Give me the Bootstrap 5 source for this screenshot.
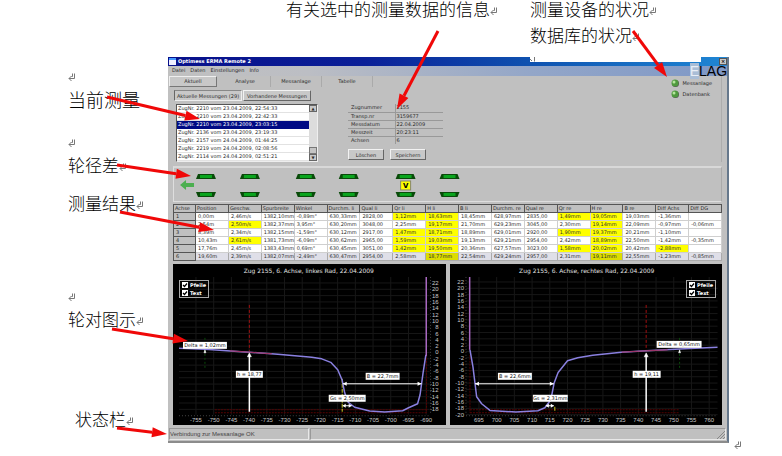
<!DOCTYPE html>
<html lang="zh">
<head>
<meta charset="utf-8">
<meta name="viewport" content="width=device-width, initial-scale=1">
<title>Optimess ERMA Remote 2</title>
<link href="https://cdn.jsdelivr.net/npm/bootstrap@5.3.0/dist/css/bootstrap.min.css" rel="stylesheet">
<style>
body{background:#fff;color:#000;font-family:"Noto Sans CJK SC",sans-serif;font-size:17px;line-height:20px;font-weight:300}
.sheet{min-height:100vh}
.captions{height:57px;padding-left:286px}
.captions .second{margin-left:32px;line-height:26px;margin-top:-4px}
.captions .first{line-height:18px}
.notes{flex:0 0 168px;padding:8px 0 0 68px}
.notes p{margin:0;white-space:nowrap}
.notes .gap-s{margin-top:4px}
.notes .gap-m{margin-top:18px}
.notes .gap-l{margin-top:22px}
.notes .gap-x{margin-top:72px}
.notes .gap-xx{margin-top:80px;padding-left:7px}
.wide-note{font-size:18px}
.edge{flex:0 0 53px;padding:0 0 7px 1px;line-height:8px}
.cr{width:8px;height:8px;fill:none;stroke:#777;stroke-width:1}
.app{background:#c0c0c0;border-right:2px solid #66788c;border-bottom:2px solid #8c8c8c;font:5px/8px "DejaVu Sans",sans-serif;color:#2c2c2c;min-width:0}
.app button,.app a,.app label{font:inherit;color:inherit;text-decoration:none}
.titlebar{height:9px;gap:2px;background:linear-gradient(90deg,#08108a 0,#0a1f98 35%,#0e52b0 65%,#1f86d4 100%);color:#fff;font-weight:700;line-height:9px;padding-left:1px}
.appicon{width:7px;height:7px;background:#eef;border-top:2px solid #49f}
.notch{left:362px;right:26px;top:0;height:5px;background:#fff}
.closebtn{width:8px;height:7px;line-height:5px!important;background:#c8c8c8;border:1px solid #555;color:#000!important;padding:0}
.menubar{height:10px;gap:5px;padding-left:4px;line-height:9px;background:linear-gradient(90deg,#c0c0c0 0,#bcbec4 25%,#93a6c8 65%,#7f98c6 100%)}
.brand{font:14px/10px "Liberation Sans",sans-serif;color:#000}
.brand b{font-weight:400;background:#a9bdd6;color:#e8eef6}
.tabrow{height:11px;padding-left:1px}
.tabrow button{width:51px;border:0;border-right:1px solid #aaa;background:none;padding:0;line-height:9px}
.tabrow .on{width:48px;margin-right:3px;border:1px solid #777;border-top-color:#eee;border-left-color:#eee;background:#c8c8c8}
.push{background:#c8c8c8;border:1px solid #666;border-top-color:#f2f2f2;border-left-color:#f2f2f2;padding:0;height:11px;line-height:8px!important}
.push.down{border-color:#888 #eee #eee #666}
.picks{gap:1px;margin:3px 0 3px 6px}
.picks .push{width:68px;white-space:nowrap}
.runs{margin-left:8px;width:142px;height:58px;background:#fff;border:1px solid #555;border-right-color:#eee;border-bottom-color:#eee}
.runs .item{display:block;padding-left:1px;border-bottom:1px solid #e2e2e2;line-height:7px;white-space:nowrap;height:8px}
.runs .item.on{background:#000b84;color:#fff;border-color:#000b84}
.bar{width:8px;background:#dcdcdc}
.bar button{width:8px;height:7px;font-size:4px;line-height:4px;padding:0;background:#c8c8c8;border:1px solid #666}
.bar i{height:7px;background:#c4c4c4;border:1px solid #777}
.facts{margin:17px 0 0 30px}
.facts table{width:95px;table-layout:fixed}
.facts th,.facts td{font-weight:400;padding:0 0 0 1px;line-height:7px;height:8px;border-bottom:1px solid #999}
.facts tr:last-child>*{border-bottom:0}
.facts th{width:47px;padding-left:3px}
.facts td{border-left:1px solid #999}
.facts .acts{gap:6px;padding-top:5px}
.facts .push{width:36px}
.lamps{padding:3px 9px 0 0;margin-right:5px;gap:3px;border-right:1px solid #adadad}
.lamps div{gap:4px}
.lamps svg{width:8px;height:8px}
.body-pad{padding:0 5px}
.wheelbox{border:1px solid #dedede;border-right-color:#aaa;border-top:2px solid #d8d8d8;margin-top:4px}
.axles{width:100%;table-layout:fixed;margin:2px 0 3px;background:#fff;border-collapse:collapse;border:1px solid #666}
.axles th,.axles td{font-weight:400;line-height:7px;padding:0 0 0 2px;border:1px solid #cfcfcf;white-space:nowrap;overflow:visible}
.axles thead th,.axles tbody th{background:#c0c0c0;border-color:#555}
.axles thead th{padding-left:1px}
.axles col:first-child{width:22px}
.axles .y{background:#ff0}
.axles tr.cur td{background:#dfdfe8;border-color:#aaa}
.axles tr.cur td.y{background:#dcdc00}
.plots{gap:4px}
.plot{background:#000;min-width:0}
.plot>svg{width:100%;height:auto}
.opts{top:16px;border:1px solid #aaa;padding:0 2px;color:#fff;font-weight:700}
.opts.l{left:6px}.opts.r{right:6px}
.opts div{gap:2px}
.opts input{appearance:none;width:6px;height:6px;margin:0;background:#fff}
.opts input:checked{background:#fff url("data:image/svg+xml,%3Csvg xmlns='http://www.w3.org/2000/svg' viewBox='0 0 6 6'%3E%3Cpath d='M1 3l1.500 1.500L5 1.500' fill='none' stroke='black' stroke-width='1.200'/%3E%3C/svg%3E")}
.statusbar{margin-top:3px;gap:1px;padding:0 1px 1px}
.statusbar div{border:1px solid #999;border-right-color:#e8e8e8;border-bottom-color:#e8e8e8;height:12px;line-height:10px;font-family:"Liberation Sans",sans-serif;font-size:6px;color:#444}
.statusbar .msg{width:140px}
.pointer-layer{left:0;top:0;pointer-events:none}
.ghostmark{left:361px;top:0;width:6px;height:6px;line-height:1}
</style>
<script src="https://cdn.jsdelivr.net/npm/bootstrap@5.3.0/dist/js/bootstrap.bundle.min.js"></script>
</head>
<body>
<svg class="d-none"><defs>
<symbol id="ret" viewBox="0 0 8 8"><path d="M6.5 .5V5.5H1M3.5 3L1 5.500L3.500 8M4.500 .5V3.500H3.500"/></symbol>
</defs></svg>
<div class="sheet position-relative d-flex flex-column">
  <header class="captions d-flex text-nowrap">
    <div class="first">有关选中的测量数据的信息<svg class="cr"><use href="#ret"/></svg></div>
    <div class="second">测量设备的状况<svg class="cr"><use href="#ret"/></svg><br>数据库的状况<svg class="cr"><use href="#ret"/></svg></div>
  </header>
  <div class="d-flex flex-grow-1">
    <aside class="notes">
      <p><svg class="cr"><use href="#ret"/></svg></p>
      <p class="wide-note gap-s">当前测量</p>
      <p class="gap-l"><svg class="cr"><use href="#ret"/></svg></p>
      <p class="gap-s">轮径差<svg class="cr"><use href="#ret"/></svg></p>
      <p class="gap-m">测量结果<svg class="cr"><use href="#ret"/></svg></p>
      <p class="gap-x"><svg class="cr"><use href="#ret"/></svg></p>
      <p class="gap-s">轮对图示<svg class="cr"><use href="#ret"/></svg></p>
      <p class="gap-xx">状态栏<svg class="cr"><use href="#ret"/></svg></p>
    </aside>
    <main class="app flex-grow-1 align-self-start position-relative">
      <div class="titlebar d-flex align-items-center"><span class="appicon"></span><span>Optimess ERMA Remote 2</span>
        <button class="closebtn ms-auto" type="button" aria-label="Close">×</button></div>
      <div class="notch position-absolute"></div>
      <svg class="cr ghostmark position-absolute"><path d="M1 2l2 2M5.500 0V4.500"/></svg>
      <nav class="menubar d-flex"><a href="#">Datei</a><a href="#">Daten</a><a href="#">Einstellungen</a><a href="#">Info</a>
        <span class="brand ms-auto"><b>E</b>LAG</span></nav>
      <div class="d-flex">
        <div>
          <div class="tabrow d-flex"><button type="button" class="on">Aktuell</button><button type="button">Analyse</button><button type="button">Messanlage</button><button type="button">Tabelle</button></div>
          <div class="d-flex">
            <div>
              <div class="picks d-flex"><button type="button" class="push down">Aktuelle Messungen (29)</button><button type="button" class="push">Vorhandene Messungen</button></div>
              <div class="runs d-flex">
                <div class="flex-grow-1">
                  <a class="item" href="#">ZugNr. 2210 vom 23.04.2009, 22:54:33</a>
                  <a class="item" href="#">ZugNr. 2210 vom 23.04.2009, 22:42:33</a>
                  <a class="item on" href="#">ZugNr. 2210 vom 23.04.2009, 23:03:15</a>
                  <a class="item" href="#">ZugNr. 2136 vom 23.04.2009, 23:19:33</a>
                  <a class="item" href="#">ZugNr. 2157 vom 24.04.2009, 01:44:25</a>
                  <a class="item" href="#">ZugNr. 2219 vom 24.04.2009, 02:08:56</a>
                  <a class="item" href="#">ZugNr. 2114 vom 24.04.2009, 02:51:21</a>
                </div>
                <div class="bar d-flex flex-column"><button type="button" aria-label="Up">▲</button><i class="mt-auto"></i><button type="button" aria-label="Down">▼</button></div>
              </div>
            </div>
            <div class="facts">
              <table>
                <tr><th>Zugnummer</th><td>2155</td></tr>
                <tr><th>Transp.nr</th><td>3159677</td></tr>
                <tr><th>Messdatum</th><td>22.04.2009</td></tr>
                <tr><th>Messzeit</th><td>20:23:11</td></tr>
                <tr><th>Achsen</th><td>6</td></tr>
              </table>
              <div class="acts d-flex"><button type="button" class="push">Löschen</button><button type="button" class="push">Speichern</button></div>
            </div>
          </div>
        </div>
        <div class="lamps ms-auto d-flex flex-column">
          <div class="d-flex"><svg viewBox="0 0 8 8"><circle cx="4.500" cy="4.500" r="3.500" fill="#555"/><circle cx="4" cy="4" r="3.500" fill="#4f9a3e"/><circle cx="3" cy="3" r="1.500" fill="#b4e69c"/></svg>Messanlage</div>
          <div class="d-flex"><svg viewBox="0 0 8 8"><circle cx="4.500" cy="4.500" r="3.500" fill="#555"/><circle cx="4" cy="4" r="3.500" fill="#4f9a3e"/><circle cx="3" cy="3" r="1.500" fill="#b4e69c"/></svg>Datenbank</div>
        </div>
      </div>
      <div class="body-pad">
        <div class="wheelbox"><svg id="wheels" class="d-block w-100" viewBox="174 168 548 33"></svg></div>
        <table class="axles"><colgroup><col></colgroup><thead><tr id="heads"></tr></thead><tbody id="rows"></tbody></table>
        <div class="plots d-flex">
          <div class="plot position-relative flex-fill"><svg id="pl" class="d-block" viewBox="173 264 273 161"></svg>
            <div class="opts l position-absolute"><div class="d-flex align-items-center"><input type="checkbox" id="p1" checked><label for="p1">Pfeile</label></div><div class="d-flex align-items-center"><input type="checkbox" id="t1" checked><label for="t1">Text</label></div></div></div>
          <div class="plot position-relative flex-fill"><svg id="pr" class="d-block" viewBox="450 264 273 161"></svg>
            <div class="opts r position-absolute"><div class="d-flex align-items-center"><input type="checkbox" id="p2" checked><label for="p2">Pfeile</label></div><div class="d-flex align-items-center"><input type="checkbox" id="t2" checked><label for="t2">Text</label></div></div></div>
        </div>
      </div>
      <div class="statusbar d-flex"><div class="msg">Verbindung zur Messanlage OK</div><div class="flex-grow-1 text-end"><svg class="d-block ms-auto" width="8" height="10" viewBox="0 0 8 10"><path d="M0 10L8 2M3 10L8 5M6 10L8 8" stroke="#888" fill="none"/></svg></div></div>
    </main>
    <div class="edge align-self-end"><svg class="cr d-block ms-1"><use href="#ret"/></svg></div>
  </div>
  <svg id="arrows" class="pointer-layer position-absolute w-100 h-100" viewBox="0 0 782 456" preserveAspectRatio="none"></svg>
</div>
<script>
// table of axles; a leading * marks a highlighted cell
const heads=['Achse','Position','Geschw.','Spurbreite','Winkel','Durchm. li','Qual li','Qr li','H li','B li','Durchm. re','Qual re','Qr re','H re','B re','Diff Achs','Diff DG'];
const rows=[
'0,00m|2,46m/s|1382,10mm|-0,89m°|630,33mm|2828,00|*1,12mm|*18,63mm|18,45mm|628,97mm|2835,00|*1,49mm|*19,05mm|19,03mm|-1,36mm|',
'2,54m|*2,50m/s|1382,37mm|3,95m°|630,20mm|3048,00|2,25mm|*19,17mm|21,70mm|629,23mm|3045,00|2,30mm|*19,14mm|22,09mm|-0,97mm|-0,06mm',
'8,39m|2,34m/s|1382,15mm|-1,59m°|630,12mm|2917,00|*1,47mm|*18,71mm|18,89mm|629,01mm|2920,00|*1,90mm|*19,37mm|20,21mm|-1,10mm|',
'10,43m|*2,61m/s|1381,73mm|-6,09m°|630,62mm|2965,00|*1,59mm|*19,03mm|19,13mm|629,21mm|2954,00|2,42mm|*18,89mm|22,50mm|-1,42mm|-0,35mm',
'17,76m|2,45m/s|1383,43mm|0,69m°|630,45mm|3051,00|*1,42mm|*19,50mm|20,36mm|627,57mm|3023,00|*1,58mm|*20,02mm|20,42mm|*-2,88mm|',
'19,60m|2,39m/s|1382,07mm|-2,49m°|630,47mm|2954,00|2,58mm|*18,77mm|22,54mm|629,24mm|2957,00|2,31mm|*19,11mm|22,55mm|-1,23mm|-0,85mm'];
document.getElementById('heads').innerHTML=heads.map(h=>`<th>${h}</th>`).join('');
document.getElementById('rows').innerHTML=rows.map((r,i)=>`<tr${i==5?' class="cur"':''}><th>${i+1}</th>`+r.split('|').map(c=>c[0]=='*'?`<td class="y">${c.slice(1)}</td>`:`<td>${c||'&nbsp;'}</td>`).join('')+'</tr>').join('');

// wheel overview
let w='<path d="M180 185l6-5v3h8v4h-8v3z" fill="#4caf50"/>';
for(const x of [206,250,306,349,406,450]){
  w+=`<path d="M${x-8} 174h16l2 5h-20z" fill="#0a4a0a"/><path d="M${x-6} 175h12v3h-12z" fill="#0aa51e"/><path d="M${x-10} 192h20l-2 5h-16z" fill="#0a4a0a"/><path d="M${x-6} 193h12v3h-12z" fill="#0aa51e"/>`;
}
w+='<rect x="401" y="181" width="10" height="9" fill="#ff0" stroke="#886"/><text x="406" y="188" font-size="7" font-weight="700" text-anchor="middle" fill="#000">V</text>';
document.getElementById('wheels').innerHTML=w;

// profile plots
function tag(x,y,wd,t){return `<rect x="${x}" y="${y}" width="${wd}" height="7" fill="#fff"/><text x="${x+wd/2}" y="${y+5.500}" font-size="5" text-anchor="middle" fill="#111">${t}</text>`}
function plot(o){
  let s=`<g stroke="#171717" stroke-width="1">`;
  for(let i=0;i<o.n;i++){const y=o.y0+i*6.330;s+=`<path d="M${o.gx1} ${y}H${o.gx2}"/>`}
  for(let i=0;i<14;i++){const x=o.x0+i*17.740;s+=`<path d="M${x} 277V415"/>`}
  s+='</g><g fill="#c8c8c8" font-family="Liberation Sans" font-size="6">';
  for(let i=0;i<14;i++)s+=`<text x="${o.x0+i*17.740}" y="422" text-anchor="middle">${o.v0+i*5}</text>`;
  for(let i=0;i<o.n;i++)s+=`<text x="${o.lx}" y="${o.y0+i*6.330+2}" text-anchor="${o.la}">${22-i*2}</text>`;
  s+=`</g><path d="M${o.ax} 277V415M${o.gx1} 416H${o.gx2}" stroke="#444" stroke-dasharray="1 2" fill="none"/>`;
  s+=`<text x="${o.tx}" y="273" font-size="6" text-anchor="middle" fill="#e0e0e0">${o.title}</text>`;
  s+=`<path d="${o.red}" stroke="#500" stroke-dasharray="2 1" fill="none"/><path d="M${o.hx} 305V351" stroke="#a01010" stroke-dasharray="3 2"/>`;
  s+=`<path d="M${o.dx} 338V368" stroke="#0a4a0a" stroke-dasharray="2 2"/><path d="${o.yel}" stroke="#cc2" stroke-dasharray="4 1"/>`;
  s+=`<path d="${o.curve}" stroke="#8a80e0" stroke-width="1.500" fill="none" stroke-linejoin="round"/><path d="${o.mid}" stroke="#a03060" fill="none"/><path d="${o.side}" stroke="#a868c0" stroke-width="1.500"/>`;
  s+=`<g stroke="#fff" fill="#fff"><path d="M${o.hx} 412V356" stroke-width="1.500"/><path d="M${o.hx} 353l2 4h-4z" stroke-width=".5"/><path d="M${o.dx} 350l1 3h-2z" stroke-width=".5"/>`;
  s+=`<path d="M${o.b1} 384H${o.b2}"/><path d="M${o.b1} 384l4-2v4zM${o.b2} 384l-4-2v4z" stroke="none"/><path d="M${o.g1} 406H${o.g2}"/><path d="M${o.g1} 406l3-2v4zM${o.g2} 406l-3-2v4z" stroke="none"/></g>`;
  return s+o.tags;
}
document.getElementById('pl').innerHTML=plot({n:21,y0:283,gx1:179,gx2:430,x0:196,v0:-755,lx:439,la:'end',ax:431,tx:309,title:'Zug 2155, 6. Achse, linkes Rad, 22.04.2009',
 red:'M215 410H427M215 413H427M427 355V413',hx:249.500,dx:205,yel:'M342.500 379V412',
 curve:'M179 348.500L205 349.500L249 352.300L278 354.500L312 357.300L322 359L331 362.500L338 370L342.500 380.500L345 393L348.500 402.500L355 407.500L370 411.300L385 412.300L403 411L409 408L418 404L420.500 395L423.500 373L426.300 355',
 mid:'M230 351L249 352.300L272 354',side:'M426.700 356V277',b1:343,b2:422,g1:343,g2:352,
 tags:tag(183,342,44,'Delta = 1,02mm')+tag(236,371,27,'h = 18,77')+tag(366,373,34,'B = 22,7mm')+tag(329,395,37,'Gs = 2,50mm')});
document.getElementById('pr').innerHTML=plot({n:22,y0:282,gx1:466,gx2:718,x0:479,v0:695,lx:464,la:'end',ax:466,tx:587,title:'Zug 2155, 6. Achse, rechtes Rad, 22.04.2009',
 red:'M470 410H680M470 413H680M470 355V413',hx:646.500,dx:680,yel:'M555 407V412',
 curve:'M470 350L473 367L476.700 397L481.700 404L490 410.700L516 412.300L538 411L545 408L551 400L554.300 383.300L558.300 372.700L567.700 361L578 358L593 355.500L621.700 352.300L646.700 351L690 348.700L718 347.300',
 mid:'M622 352.300L646 351L668 350',side:'M469.700 350V277',b1:475,b2:554,g1:546,g2:554,
 tags:tag(657,341,45,'Delta = 0,65mm')+tag(633,371,28,'h = 19,11')+tag(498,373,34,'B = 22,6mm')+tag(533,395,35,'Gs = 2,31mm')});

// callout arrows: start and tip
document.getElementById('arrows').innerHTML=[[107,97,200,119],[117,165,191,176],[120,212,214,230],[112,329,188,341],[117,428,167,434],[438,31,397,109],[633,31,667,77]].map(([x,y,u,v])=>{
  const l=Math.hypot(u-x,v-y),a=(u-x)/l,b=(v-y)/l,bx=u-a*15,by=v-b*15;
  return `<path d="M${x} ${y}L${bx} ${by}" stroke="#f00808" stroke-width="3"/><path d="M${u} ${v}L${bx-b*5} ${by+a*5}L${bx+b*5} ${by-a*5}z" fill="#f00808"/>`}).join('');
</script>
</body>
</html>
